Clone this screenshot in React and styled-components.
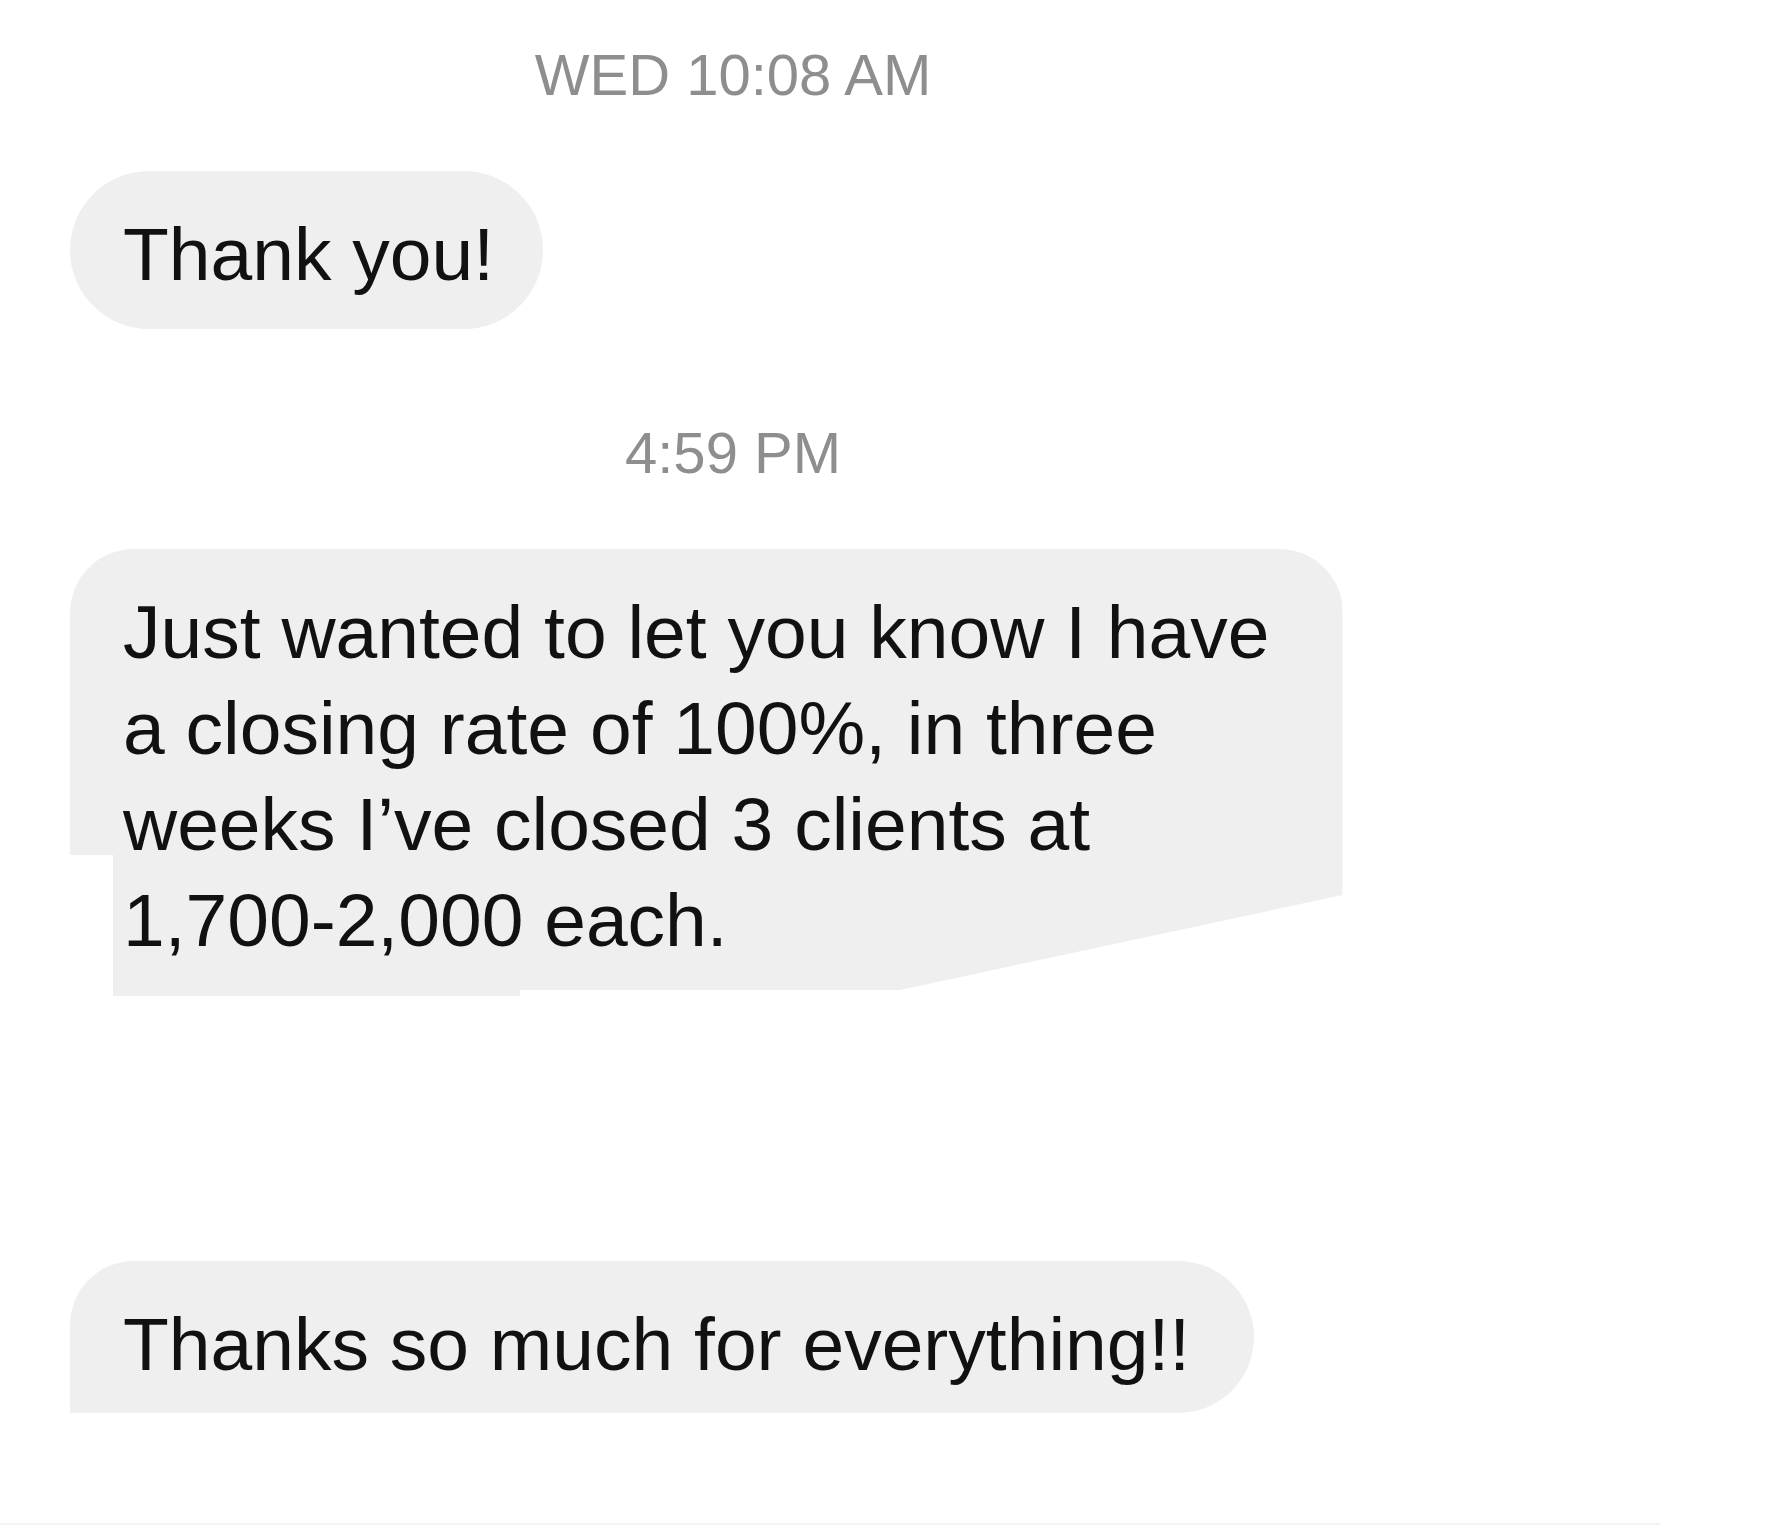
import React from "react";
import styled, { createGlobalStyle } from "styled-components";

const Global = createGlobalStyle`
  html, body {
    margin: 0;
    padding: 0;
    background: #ffffff;
  }
  body {
    font-family: "Liberation Sans", Arial, sans-serif;
    -webkit-font-smoothing: antialiased;
  }
`;

const Page = styled.div`
  width: 1765px;
  min-height: 1532px;
  background: #ffffff;
  overflow: hidden;
`;

const Thread = styled.main`
  width: 1466px;
  display: flex;
  flex-direction: column;
  align-items: flex-start;
  padding-top: 40px;
`;

const Stamp = styled.div`
  align-self: stretch;
  text-align: center;
  font-size: 58px;
  line-height: 70px;
  color: #8e8e8e;
  letter-spacing: 0;
  margin-top: ${(p) => p.$gap || 0}px;
`;

const Bubble = styled.div`
  margin-top: ${(p) => p.$gap}px;
  margin-left: 70px;
  box-sizing: border-box;
  background: #efefef;
  color: #111111;
  font-size: 75px;
  line-height: 96px;
  white-space: nowrap;
  padding: 35px ${(p) => p.$padRight}px ${(p) => p.$padBottom}px 53px;
  border-radius: ${(p) => p.$radius};
  clip-path: ${(p) => p.$clip || "none"};
`;

const Line = styled.span`
  display: block;
`;

const Divider = styled.hr`
  margin: 110px 0 0 0;
  width: 1660px;
  height: 2px;
  border: none;
  background: #f3f3f3;
`;

const lines = [
  "Just wanted to let you know I have",
  "a closing rate of 100%, in three",
  "weeks I\u2019ve closed 3 clients at",
  "1,700-2,000 each.",
];

const ragged =
  "polygon(0 0, 100% 0, 100% 346px, 830px 441px, 450px 441px, 450px 447px, 43px 447px, 43px 306px, 0 306px)";

export default function App() {
  return (
    <Page>
      <Global />
      <Thread>
        <Stamp>WED 10:08 AM</Stamp>
        <Bubble $gap={61} $padRight={49} $padBottom={27} $radius="79px">
          Thank you!
        </Bubble>

        <Stamp $gap={89}>4:59 PM</Stamp>
        <Bubble
          $gap={61}
          $padRight={73}
          $padBottom={28}
          $radius="64px 64px 0 0"
          $clip={ragged}
        >
          {lines.map((l) => (
            <Line key={l}>{l}</Line>
          ))}
        </Bubble>

        <Bubble $gap={265} $padRight={64} $padBottom={21} $radius="64px 76px 76px 0">
          Thanks so much for everything!!
        </Bubble>

        <Divider />
      </Thread>
    </Page>
  );
}
